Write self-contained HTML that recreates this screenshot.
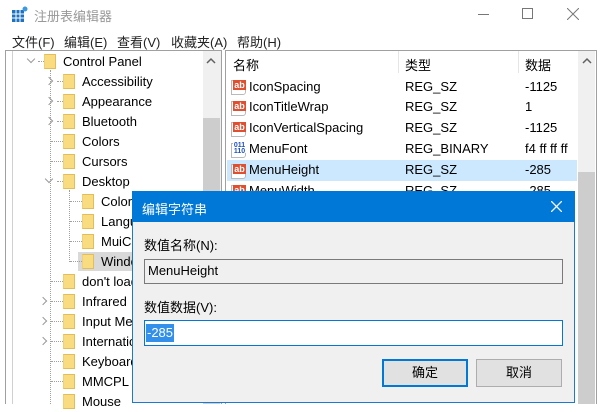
<!DOCTYPE html>
<html><head><meta charset="utf-8"><style>
*{margin:0;padding:0;box-sizing:border-box}
body{width:601px;height:404px;overflow:hidden;background:#fff;font-family:"Liberation Sans","Noto Sans CJK SC",sans-serif;font-size:13px;color:#000;position:relative}
.a{position:absolute;white-space:nowrap}
.f{position:absolute;width:12px;height:15px;background:#f9dc80;border:1px solid #e2bd5a;border-left-color:#efd07a}
.t{position:absolute;line-height:20px;margin-top:1px}
.chev{position:absolute;width:6px;height:6px;border-right:1.5px solid #9a9a9a;border-bottom:1.5px solid #9a9a9a}
.dh{position:absolute;height:0;border-top:1px dotted #a0a0a0}
.dv{position:absolute;width:0;border-left:1px dotted #a0a0a0}
.ab{position:absolute;width:15px;height:15px;background:#fff;border:1px solid #b9b9b9;border-radius:0 0 3px 0}
.ab span{position:absolute;left:1px;top:-1px;width:13px;height:10px;background:#e05030;color:#fff;font-size:9px;line-height:10px;font-weight:bold;text-align:center}
.r{position:absolute;line-height:20px}
</style></head><body>
<svg class="a" style="left:12px;top:6px" width="16" height="16"><rect x="0" y="4" width="12" height="12" fill="#1f72c0"/><g stroke="#fff" stroke-width="1"><line x1="4" y1="4" x2="4" y2="16"/><line x1="8" y1="4" x2="8" y2="16"/><line x1="0" y1="8" x2="12" y2="8"/><line x1="0" y1="12" x2="12" y2="12"/></g><circle cx="13" cy="3" r="2.5" fill="#3a9ae0"/></svg>
<div class="a" style="left:34px;top:6px;color:#999;font-size:13px">注册表编辑器</div>
<div class="a" style="left:478px;top:14px;width:11px;border-top:1px solid #777"></div>
<div class="a" style="left:522px;top:8px;width:11px;height:11px;border:1px solid #777"></div>
<svg class="a" style="left:567px;top:8px" width="12" height="12"><path d="M0 0L12 12M12 0L0 12" stroke="#777" stroke-width="1"/></svg>
<div class="a" style="left:12px;top:32px;color:#222">文件(F)</div>
<div class="a" style="left:64px;top:32px;color:#222">编辑(E)</div>
<div class="a" style="left:117px;top:32px;color:#222">查看(V)</div>
<div class="a" style="left:171px;top:32px;color:#222">收藏夹(A)</div>
<div class="a" style="left:237px;top:32px;color:#222">帮助(H)</div>
<div class="a" style="left:5px;top:50px;width:217px;height:354px;border:1px solid #a0a0a0;border-bottom:none"></div>
<div class="a" style="left:203px;top:51px;width:18px;height:353px;background:#f0f0f0"></div>
<div class="a" style="left:203px;top:118px;width:17px;height:286px;background:#cdcdcd"></div>
<svg class="a" style="left:206px;top:57px" width="10" height="8"><path d="M1 6L5 2L9 6" stroke="#606060" stroke-width="1.5" fill="none"/></svg>
<div class="dv" style="left:12px;top:51px;height:353px;border-left:1px solid #d0d0d0"></div>
<div class="dv" style="left:50px;top:70px;height:334px"></div>
<div class="dv" style="left:69px;top:190px;height:72px"></div>
<div class="chev" style="left:28px;top:56px;transform:rotate(45deg)"></div>
<div class="dh" style="left:38px;top:61px;width:6px"></div>
<div class="f" style="left:44px;top:54px"></div><div class="t" style="left:63px;top:51px">Control Panel</div>
<div class="chev" style="left:46px;top:78px;transform:rotate(-45deg)"></div><div class="dh" style="left:57px;top:81px;width:6px"></div><div class="f" style="left:63px;top:74px"></div><div class="t" style="left:82px;top:71px">Accessibility</div>
<div class="chev" style="left:46px;top:98px;transform:rotate(-45deg)"></div><div class="dh" style="left:57px;top:101px;width:6px"></div><div class="f" style="left:63px;top:94px"></div><div class="t" style="left:82px;top:91px">Appearance</div>
<div class="chev" style="left:46px;top:118px;transform:rotate(-45deg)"></div><div class="dh" style="left:57px;top:121px;width:6px"></div><div class="f" style="left:63px;top:114px"></div><div class="t" style="left:82px;top:111px">Bluetooth</div>
<div class="dh" style="left:51px;top:141px;width:12px"></div><div class="f" style="left:63px;top:134px"></div><div class="t" style="left:82px;top:131px">Colors</div>
<div class="dh" style="left:51px;top:161px;width:12px"></div><div class="f" style="left:63px;top:154px"></div><div class="t" style="left:82px;top:151px">Cursors</div>
<div class="chev" style="left:46px;top:176px;transform:rotate(45deg)"></div><div class="dh" style="left:57px;top:181px;width:6px"></div><div class="f" style="left:63px;top:174px"></div><div class="t" style="left:82px;top:171px">Desktop</div>
<div class="dh" style="left:70px;top:201px;width:12px"></div><div class="f" style="left:82px;top:194px"></div><div class="t" style="left:101px;top:191px">Colors</div>
<div class="dh" style="left:70px;top:221px;width:12px"></div><div class="f" style="left:82px;top:214px"></div><div class="t" style="left:101px;top:211px">Language</div>
<div class="dh" style="left:70px;top:241px;width:12px"></div><div class="f" style="left:82px;top:234px"></div><div class="t" style="left:101px;top:231px">MuiCached</div>
<div class="a" style="left:78px;top:252px;width:60px;height:19px;background:#d9d9d9"></div>
<div class="dh" style="left:70px;top:261px;width:12px"></div><div class="f" style="left:82px;top:254px"></div><div class="t" style="left:101px;top:251px">Windows</div>
<div class="dh" style="left:51px;top:281px;width:12px"></div><div class="f" style="left:63px;top:274px"></div><div class="t" style="left:82px;top:271px">don't load</div>
<div class="chev" style="left:40px;top:298px;transform:rotate(-45deg)"></div><div class="dh" style="left:51px;top:301px;width:12px"></div><div class="f" style="left:63px;top:294px"></div><div class="t" style="left:82px;top:291px">Infrared</div>
<div class="chev" style="left:40px;top:318px;transform:rotate(-45deg)"></div><div class="dh" style="left:51px;top:321px;width:12px"></div><div class="f" style="left:63px;top:314px"></div><div class="t" style="left:82px;top:311px">Input Method</div>
<div class="chev" style="left:40px;top:338px;transform:rotate(-45deg)"></div><div class="dh" style="left:51px;top:341px;width:12px"></div><div class="f" style="left:63px;top:334px"></div><div class="t" style="left:82px;top:331px">International</div>
<div class="dh" style="left:51px;top:361px;width:12px"></div><div class="f" style="left:63px;top:354px"></div><div class="t" style="left:82px;top:351px">Keyboard</div>
<div class="dh" style="left:51px;top:381px;width:12px"></div><div class="f" style="left:63px;top:374px"></div><div class="t" style="left:82px;top:371px">MMCPL</div>
<div class="f" style="left:63px;top:394px"></div><div class="t" style="left:82px;top:391px">Mouse</div>
<div class="a" style="left:225px;top:50px;width:372px;height:354px;border:1px solid #a0a0a0;border-bottom:none"></div>
<div class="a" style="left:578px;top:51px;width:17px;height:353px;background:#f0f0f0"></div>
<div class="a" style="left:578px;top:172px;width:17px;height:232px;background:#cdcdcd"></div>
<svg class="a" style="left:582px;top:57px" width="10" height="8"><path d="M1 6L5 2L9 6" stroke="#606060" stroke-width="1.5" fill="none"/></svg>
<div class="a" style="left:398px;top:51px;height:22px;border-left:1px solid #e5e5e5"></div>
<div class="a" style="left:518px;top:51px;height:22px;border-left:1px solid #e5e5e5"></div>
<div class="a" style="left:233px;top:55px">名称</div>
<div class="a" style="left:405px;top:55px">类型</div>
<div class="a" style="left:525px;top:55px">数据</div>
<div class="a" style="left:227px;top:160px;width:350px;height:21px;background:#cce8ff"></div>
<div class="ab" style="left:231px;top:80px"><span>ab</span></div><div class="r" style="left:249px;top:77px">IconSpacing</div><div class="r" style="left:405px;top:77px">REG_SZ</div><div class="r" style="left:525px;top:77px">-1125</div>
<div class="ab" style="left:231px;top:101px"><span>ab</span></div><div class="r" style="left:249px;top:97px">IconTitleWrap</div><div class="r" style="left:405px;top:97px">REG_SZ</div><div class="r" style="left:525px;top:97px">1</div>
<div class="ab" style="left:231px;top:122px"><span>ab</span></div><div class="r" style="left:249px;top:118px">IconVerticalSpacing</div><div class="r" style="left:405px;top:118px">REG_SZ</div><div class="r" style="left:525px;top:118px">-1125</div>
<div class="ab" style="left:231px;top:143px"><span style="background:#fff;color:#2050c0;font-size:7px;line-height:6px">011<br>110</span></div><div class="r" style="left:249px;top:139px">MenuFont</div><div class="r" style="left:405px;top:139px">REG_BINARY</div><div class="r" style="left:525px;top:139px">f4 ff ff ff</div>
<div class="ab" style="left:231px;top:164px"><span>ab</span></div><div class="r" style="left:249px;top:160px">MenuHeight</div><div class="r" style="left:405px;top:160px">REG_SZ</div><div class="r" style="left:525px;top:160px">-285</div>
<div class="ab" style="left:231px;top:185px"><span>ab</span></div><div class="r" style="left:249px;top:181px">MenuWidth</div><div class="r" style="left:405px;top:181px">REG_SZ</div><div class="r" style="left:525px;top:181px">-285</div>
<div class="a" style="left:132px;top:191px;width:443px;height:212px;background:#f0f0f0;border:1px solid #1a7ad0"></div>
<div class="a" style="left:132px;top:191px;width:443px;height:31px;background:#0078d7"></div>
<div class="a" style="left:142px;top:199px;color:#fff">编辑字符串</div>
<svg class="a" style="left:551px;top:201px" width="11" height="11"><path d="M0 0L11 11M11 0L0 11" stroke="#fff" stroke-width="1.3"/></svg>
<div class="a" style="left:144px;top:235px">数值名称(N):</div>
<div class="a" style="left:144px;top:259px;width:419px;height:25px;border:1px solid #7a7a7a;background:#f0f0f0"></div>
<div class="a" style="left:148px;top:262px;line-height:18px">MenuHeight</div>
<div class="a" style="left:144px;top:297px">数值数据(V):</div>
<div class="a" style="left:144px;top:320px;width:419px;height:26px;border:1px solid #0078d7;background:#fff"></div>
<div class="a" style="left:146px;top:324px;height:18px;line-height:18px;background:#3390ea;color:#fff;padding:0 1px">-285</div>
<div class="a" style="left:382px;top:359px;width:86px;height:28px;border:2px solid #0078d7;background:#e1e1e1;text-align:center;line-height:24px">确定</div>
<div class="a" style="left:476px;top:359px;width:86px;height:28px;border:1px solid #adadad;background:#e1e1e1;text-align:center;line-height:26px">取消</div>
</body></html>
